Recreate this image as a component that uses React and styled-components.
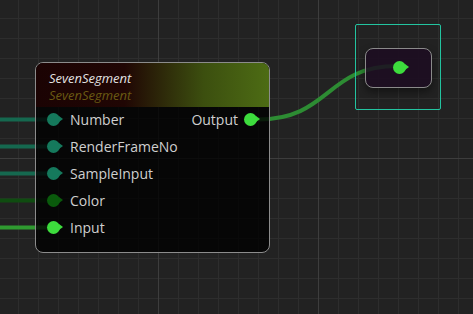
import React from 'react'
import styled, { createGlobalStyle } from 'styled-components'

const GlobalStyle = createGlobalStyle`
  html, body {
    margin: 0;
    padding: 0;
    background: #222;
    overflow: hidden;
  }
`

const Canvas = styled.div`
  position: relative;
  width: 473px;
  height: 314px;
  overflow: hidden;
  background-color: #222222;
  background-image:
    linear-gradient(to right, #3d3d3d 1px, transparent 1px),
    linear-gradient(to bottom, #3d3d3d 1px, transparent 1px),
    linear-gradient(to right, #2d2d2d 1px, transparent 1px),
    linear-gradient(to bottom, #2d2d2d 1px, transparent 1px);
  background-size: 160px 160px, 160px 160px, 20px 20px, 20px 20px;
  background-position: -2px -2px, -2px -2px, -2px -2px, -2px -2px;
  font-family: "Open Sans", "DejaVu Sans", sans-serif;
`

const Wires = styled.svg`
  position: absolute;
  left: 0;
  top: 0;
`

const Node = styled.div`
  position: absolute;
  left: 35px;
  top: 62px;
  width: 233px;
  height: 189px;
  border: 1px solid #8c8c8c;
  border-radius: 8px;
  background: rgba(0, 0, 0, 0.8);
  overflow: hidden;
  display: flex;
  flex-direction: column;
`

const Header = styled.div`
  height: 44px;
  padding: 7px 0 0 13px;
  box-sizing: border-box;
  background: linear-gradient(90deg, #1b0303 0%, #200604 38%, #3c4f0f 72%, #4d6c14 100%);
  display: flex;
  flex-direction: column;
`

const Title = styled.div`
  font-style: italic;
  font-size: 13px;
  line-height: 17px;
  color: ${p => p.$dim ? '#6a5a12' : '#e2e2e2'};
`

const Rows = styled.div`
  display: flex;
  flex-direction: column;
  margin-top: -1.5px;
`

const Row = styled.div`
  height: 27px;
  display: flex;
  align-items: center;
  justify-content: space-between;
  padding: 0 8px 0 11px;
`

const Port = styled.div`
  display: flex;
  align-items: center;
  gap: 6px;
  font-size: 14px;
  color: #cfcfcf;
`

const Socket = styled.span`
  position: relative;
  flex: 0 0 13px;
  width: 13px;
  height: 13px;
  border-radius: 50%;
  background: ${p => p.$color};
  margin-right: 4px;
  &::after {
    content: '';
    position: absolute;
    left: 12px;
    top: 3.5px;
    border-top: 3px solid transparent;
    border-bottom: 3px solid transparent;
    border-left: 4px solid ${p => p.$color};
  }
`

const Selection = styled.div`
  position: absolute;
  left: 355px;
  top: 24px;
  width: 84px;
  height: 84px;
  border: 1px solid #23c4a0;
  border-radius: 2px;
  display: flex;
  align-items: center;
  justify-content: center;
`

const MiniNode = styled.div`
  width: 65px;
  height: 38px;
  margin: 0 0 -1px 1px;
  border: 1.5px solid #8a8a8a;
  border-radius: 8px;
  background: rgba(28, 12, 33, 0.85);
  box-shadow: 0 4px 8px rgba(0, 0, 0, 0.45);
  display: flex;
  align-items: center;
  justify-content: center;
  & > span {
    margin: 0 0 1px 2px;
  }
`

const TEAL = '#15795c'
const DARK = '#0a5a0c'
const GREEN = '#3ddc3d'

const inputs = [
  { name: 'Number', color: TEAL, wire: '#15684f' },
  { name: 'RenderFrameNo', color: TEAL, wire: '#15684f' },
  { name: 'SampleInput', color: TEAL, wire: '#15684f' },
  { name: 'Color', color: DARK, wire: '#0f4c10' },
  { name: 'Input', color: GREEN, wire: '#2f9a30' },
]

const App = () => {
  return (
    <Canvas>
      <GlobalStyle />
      <Wires width="473" height="314">
        {inputs.map((p, i) => (
          <line key={p.name} x1="0" x2="52" y1={119.5 + i * 27} y2={119.5 + i * 27}
            stroke={p.wire} strokeWidth="4" />
        ))}
        <path d="M 258 119.5 C 330 119.5, 326 66, 397 66" fill="none"
          stroke="#2d8c33" strokeWidth="4" />
      </Wires>
      <Node>
        <Header>
          <Title>SevenSegment</Title>
          <Title $dim>SevenSegment</Title>
        </Header>
        <Rows>
          {inputs.map((p, i) => (
            <Row key={p.name}>
              <Port>
                <Socket $color={p.color} />
                {p.name}
              </Port>
              {i === 0 && (
                <Port>
                  Output
                  <Socket $color={GREEN} />
                </Port>
              )}
            </Row>
          ))}
        </Rows>
      </Node>
      <Selection>
        <MiniNode>
          <Socket $color={GREEN} />
        </MiniNode>
      </Selection>
    </Canvas>
  )
}

export default App
